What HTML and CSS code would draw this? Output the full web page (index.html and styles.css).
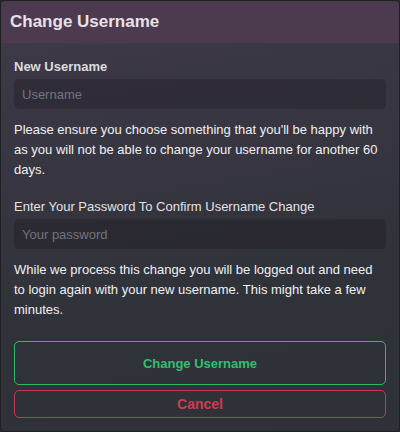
FILE: index.html
```html
<!DOCTYPE html>
<html>
<head>
<meta charset="utf-8">
<link rel="stylesheet" href="styles.css">
</head>
<body>
<div class="modal">
  <div class="modal-header">
    <h1 class="title">Change Username</h1>
  </div>
  <div class="modal-body">
    <label class="label label-bold">New Username</label>
    <input class="input" type="text" placeholder="Username">
    <p class="note">Please ensure you choose something that you'll be happy with as you will not be able to change your username for another 60 days.</p>
    <label class="label label-pw">Enter Your Password To Confirm Username Change</label>
    <input class="input" type="password" placeholder="Your password">
    <p class="note">While we process this change you will be logged out and need to login again with your new username. This might take a few minutes.</p>
    <div class="actions">
      <button class="btn btn-confirm">Change Username</button>
      <button class="btn btn-cancel">Cancel</button>
    </div>
  </div>
</div>
</body>
</html>
```

FILE: styles.css
```css
html, body {
  margin: 0;
  padding: 0;
  background: #26272b;
}
body {
  font-family: "Liberation Sans", Arial, sans-serif;
  width: 400px;
  height: 432px;
  overflow: hidden;
}
.modal {
  box-sizing: border-box;
  width: 400px;
  height: 432px;
  border: 1px solid #1f2024;
  border-radius: 5px;
  overflow: hidden;
  display: flex;
  flex-direction: column;
  background: linear-gradient(170deg, #3f3a48 0%, #363540 40%, #2f3238 70%, #2e3137 100%);
}
.modal-header {
  height: 42px;
  flex: none;
  background: #4c3a4e;
  display: flex;
  align-items: center;
  padding: 0 9px;
}
.title {
  margin: 0;
  font-size: 17px;
  font-weight: bold;
  color: #e6e2e8;
}
.modal-body {
  display: flex;
  flex-direction: column;
  padding: 16px 13px 0 13px;
}
.label {
  font-size: 13px;
  color: #dcdcdf;
  line-height: 16px;
}
.label-bold {
  font-weight: bold;
}
.label-pw {
  margin-top: 19px;
  color: #e2e2e6;
}
.input {
  margin-top: 4px;
  height: 30px;
  box-sizing: border-box;
  border: none;
  border-radius: 5px;
  background: rgba(20, 18, 26, 0.28);
  padding: 0 8px;
  font-family: "Liberation Sans", Arial, sans-serif;
  font-size: 13px;
  color: #ddd;
  outline: none;
}
.input::placeholder {
  color: #74737b;
}
.note {
  margin: 11px 0 0 0;
  font-size: 13px;
  line-height: 20px;
  color: #f0f0f2;
}
.actions {
  margin-top: 21px;
  display: flex;
  flex-direction: column;
  gap: 5px;
}
.btn {
  font-family: "Liberation Sans", Arial, sans-serif;
  background: transparent;
  border-radius: 5px;
  font-weight: bold;
  cursor: pointer;
}
.btn-confirm {
  height: 44px;
  border: 1px solid #2dba6a;
  color: #30c06e;
  font-size: 13px;
}
.btn-cancel {
  height: 28px;
  border: 1px solid #c7354e;
  color: #d03a52;
  font-size: 14px;
}
```
